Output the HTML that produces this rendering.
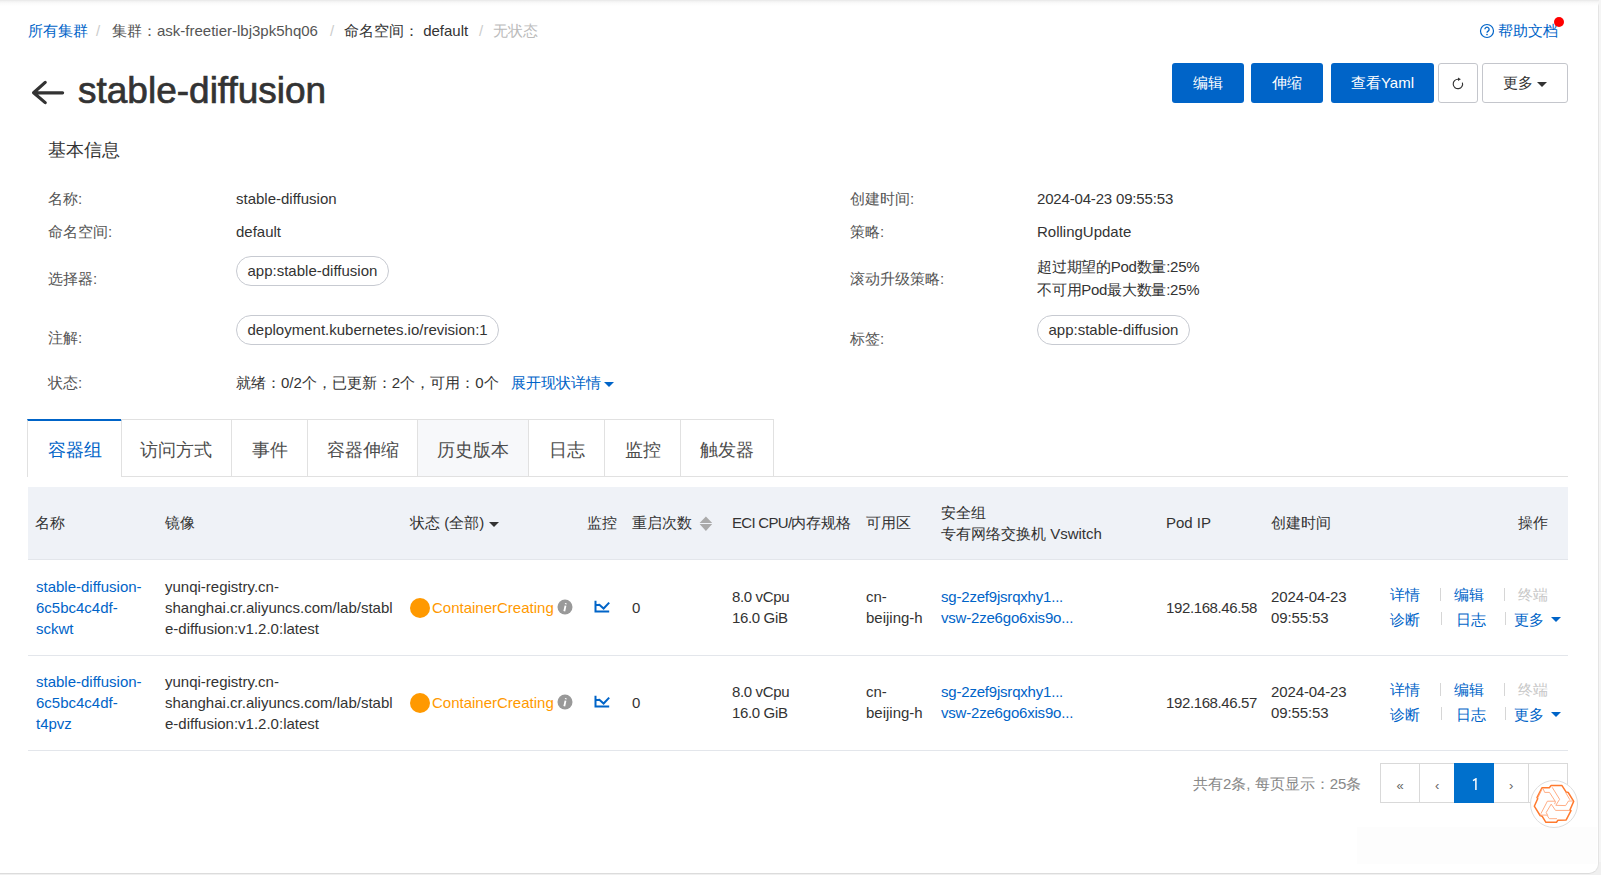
<!DOCTYPE html>
<html><head><meta charset="utf-8">
<style>
html,body{margin:0;padding:0}
body{width:1601px;height:875px;overflow:hidden;background:#f0f0f0;position:relative;font-family:"Liberation Sans",sans-serif;font-size:15px;color:#333}
#panel{position:absolute;left:-10px;top:0;width:1608px;height:873px;background:#fff;border-right:1px solid #e4e4e4;border-bottom:1px solid #dcdcdc;border-bottom-right-radius:10px}
#topshade{position:absolute;left:0;top:0;width:1601px;height:6px;background:linear-gradient(#e6e6e6,#f2f2f2 20%,#fafafa 50%,rgba(255,255,255,0))}
.t{position:absolute;white-space:nowrap;line-height:20px}
.blue{color:#0064c8}
.lbl{color:#555}
.btn{position:absolute;top:63px;height:40px;background:#0064c8;border-radius:3px;color:#fff;font-size:15px;line-height:40px;text-align:center}
.obtn{position:absolute;top:63px;height:38px;background:#fff;border:1px solid #c4c6cc;border-radius:3px;color:#333;line-height:38px;text-align:center}
.tag{position:absolute;height:28px;border:1px solid #c7cad1;border-radius:15px;line-height:27px;padding:0 10.5px;color:#333}
.tab{position:absolute;top:419px;height:56px;border-top:1px solid #e1e1e1;border-right:1px solid #e1e1e1;border-bottom:1px solid #e1e1e1;font-size:17.5px;line-height:60px;color:#4d4d4d;text-align:center;box-sizing:content-box}
.hdr{position:absolute;left:28px;top:487px;width:1540px;height:72px;background:#eff2f7;border-bottom:1px solid #e3e6eb}
.rowline{position:absolute;left:28px;width:1540px;height:1px;background:#e3e6eb}
.sep{position:absolute;width:1px;height:13px;background:#d6d6d6}
</style></head><body>
<div id="panel"></div>
<div id="topshade"></div>
<div style="position:absolute;left:1599px;top:0;width:2px;height:862px;background:#f5f5f5"></div>

<!-- breadcrumb -->
<div class="t blue" style="left:28px;top:21px">所有集群</div>
<div class="t" style="left:96px;top:21px;color:#ccc">/</div>
<div class="t" style="left:112px;top:21px;color:#555">集群：ask-freetier-lbj3pk5hq06</div>
<div class="t" style="left:330px;top:21px;color:#ccc">/</div>
<div class="t" style="left:344px;top:21px;color:#333">命名空间：&nbsp;default</div>
<div class="t" style="left:479px;top:21px;color:#ccc">/</div>
<div class="t" style="left:493px;top:21px;color:#bbb">无状态</div>

<!-- help -->
<svg style="position:absolute;left:1479px;top:23px" width="16" height="16" viewBox="0 0 16 16"><circle cx="8" cy="8" r="6.5" fill="none" stroke="#0064c8" stroke-width="1.2"/><path d="M5.9 6.3a2.1 2.1 0 1 1 3.2 1.8c-.8.5-1.1.8-1.1 1.6" fill="none" stroke="#0064c8" stroke-width="1.3"/><circle cx="8" cy="11.6" r=".8" fill="#0064c8"/></svg>
<div class="t blue" style="left:1498px;top:21px">帮助文档</div>
<div style="position:absolute;left:1554px;top:17px;width:10px;height:10px;border-radius:50%;background:#f00"></div>

<!-- title -->
<svg style="position:absolute;left:30px;top:79px" width="36" height="28" viewBox="0 0 36 28"><path d="M3.6 13.8H32.6M15.2 3.4L3.6 13.8L15.2 23.6" fill="none" stroke="#333" stroke-width="3.2" stroke-linecap="round" stroke-linejoin="round"/></svg>
<div class="t" style="left:78px;top:69px;font-size:37px;line-height:44px;color:#333;-webkit-text-stroke:0.7px #333">stable-diffusion</div>

<!-- buttons -->
<div class="btn" style="left:1172px;width:72px">编辑</div>
<div class="btn" style="left:1251px;width:72px">伸缩</div>
<div class="btn" style="left:1331px;width:103px">查看Yaml</div>
<div class="obtn" style="left:1438px;width:38px"><svg style="position:absolute;left:11px;top:12px" width="16" height="16" viewBox="0 0 16 16"><path d="M12.4 6.6A4.7 4.7 0 1 1 8.2 3.3" fill="none" stroke="#333" stroke-width="1.15"/><path d="M8 1.5L10.9 3.3L8 5.1Z" fill="#333"/></svg></div>
<div class="obtn" style="left:1482px;width:84px"><span style="position:absolute;left:20px;top:0">更多</span><svg style="position:absolute;left:54px;top:18px" width="11" height="6" viewBox="0 0 11 6"><path d="M0 0H10L5 5Z" fill="#333"/></svg></div>

<!-- basic info -->
<div class="t" style="left:48px;top:138px;font-size:17.5px;line-height:24px">基本信息</div>

<div class="t lbl" style="left:48px;top:189px">名称:</div>
<div class="t" style="left:236px;top:189px">stable-diffusion</div>
<div class="t lbl" style="left:48px;top:222px">命名空间:</div>
<div class="t" style="left:236px;top:222px">default</div>
<div class="t lbl" style="left:48px;top:269px">选择器:</div>
<div class="tag" style="left:236px;top:256px">app:stable-diffusion</div>
<div class="t lbl" style="left:48px;top:328px">注解:</div>
<div class="tag" style="left:236px;top:315px">deployment.kubernetes.io/revision:1</div>
<div class="t lbl" style="left:48px;top:373px">状态:</div>
<div class="t" style="left:236px;top:373px">就绪：0/2个，已更新：2个，可用：0个</div>
<div class="t blue" style="left:511px;top:373px">展开现状详情</div>
<svg style="position:absolute;left:604px;top:382px" width="11" height="6" viewBox="0 0 11 6"><path d="M0 0H10L5 5Z" fill="#0064c8"/></svg>

<div class="t lbl" style="left:850px;top:189px">创建时间:</div>
<div class="t" style="left:1037px;top:189px;letter-spacing:-0.17px">2024-04-23 09:55:53</div>
<div class="t lbl" style="left:850px;top:222px">策略:</div>
<div class="t" style="left:1037px;top:222px">RollingUpdate</div>
<div class="t lbl" style="left:850px;top:269px">滚动升级策略:</div>
<div class="t" style="left:1037px;top:257px"><span style="letter-spacing:-0.25px">超过期望的Pod数量:25%</span></div>
<div class="t" style="left:1037px;top:280px"><span style="letter-spacing:-0.25px">不可用Pod最大数量:25%</span></div>
<div class="t lbl" style="left:850px;top:329px">标签:</div>
<div class="tag" style="left:1037px;top:315px">app:stable-diffusion</div>

<!-- tabs -->
<div style="position:absolute;left:121px;top:476px;width:1447px;height:1px;background:#e1e1e1"></div>
<div class="tab" style="left:27px;width:93px;border-left:1px solid #e1e1e1;border-top:2px solid #0064c8;height:56px;line-height:59px;border-bottom:none;background:#fff;color:#0064c8">容器组</div>
<div class="tab" style="left:121px;width:110px">访问方式</div>
<div class="tab" style="left:232px;width:75px">事件</div>
<div class="tab" style="left:308px;width:109px">容器伸缩</div>
<div class="tab" style="left:418px;width:110px;background:#f7f8fa">历史版本</div>
<div class="tab" style="left:529px;width:75px">日志</div>
<div class="tab" style="left:605px;width:75px">监控</div>
<div class="tab" style="left:681px;width:92px">触发器</div>

<!-- table header -->
<div class="hdr"></div>
<div class="t" style="left:35px;top:513px">名称</div>
<div class="t" style="left:165px;top:513px">镜像</div>
<div class="t" style="left:410px;top:513px">状态 (全部)</div>
<svg style="position:absolute;left:489px;top:522px" width="11" height="6" viewBox="0 0 11 6"><path d="M0 0H10L5 5Z" fill="#333"/></svg>
<div class="t" style="left:587px;top:513px">监控</div>
<div class="t" style="left:632px;top:513px">重启次数</div>
<svg style="position:absolute;left:699px;top:516px" width="15" height="16" viewBox="0 0 15 16"><path d="M0.6 6.9L6.9 0.6L13.2 6.9Z M0.6 8.1L13.2 8.1L6.9 14.9Z" fill="#aaa"/></svg>
<div class="t" style="left:732px;top:513px"><span style="letter-spacing:-0.7px">ECI CPU/</span>内存规格</div>
<div class="t" style="left:866px;top:513px">可用区</div>
<div class="t" style="left:941px;top:503px">安全组</div>
<div class="t" style="left:941px;top:524px">专有网络交换机 Vswitch</div>
<div class="t" style="left:1166px;top:513px">Pod IP</div>
<div class="t" style="left:1271px;top:513px">创建时间</div>
<div class="t" style="left:1518px;top:513px">操作</div>

<div class="rowline" style="top:655px"></div>
<div class="rowline" style="top:750px"></div>

<!-- row 1 -->
<div class="t blue" style="left:36px;top:576px;line-height:21px">stable-diffusion-<br>6c5bc4c4df-<br>sckwt</div>
<div class="t" style="left:165px;top:576px;line-height:21px">yunqi-registry.cn-<br>shanghai.cr.aliyuncs.com/lab/stabl<br>e-diffusion:v1.2.0:latest</div>
<div style="position:absolute;left:410px;top:598px;width:20px;height:20px;border-radius:50%;background:#ff9900"></div>
<div class="t" style="left:432px;top:598px;color:#ff9900">ContainerCreating</div>
<svg style="position:absolute;left:557px;top:599px" width="16" height="16" viewBox="0 0 16 16"><circle cx="8" cy="8" r="7.5" fill="#999"/><path d="M8.9 4.3L8.7 5.3M8.5 6.6L7.3 12.3" stroke="#fff" stroke-width="1.8" fill="none"/></svg>
<svg style="position:absolute;left:593px;top:599px" width="18" height="15" viewBox="0 0 18 15"><path d="M2.5 1.7V12.6H16.2M2.5 6.2L6.4 5.8L10.6 9.5L16.2 3.6" fill="none" stroke="#0064c8" stroke-width="2"/></svg>
<div class="t" style="left:632px;top:598px">0</div>
<div class="t" style="left:732px;top:586px;line-height:21px;letter-spacing:-0.35px">8.0 vCpu<br>16.0 GiB</div>
<div class="t" style="left:866px;top:586px;line-height:21px">cn-<br>beijing-h</div>
<div class="t blue" style="left:941px;top:586px;line-height:21px;letter-spacing:-0.2px">sg-2zef9jsrqxhy1...<br>vsw-2ze6go6xis9o...</div>
<div class="t" style="left:1166px;top:598px;letter-spacing:-0.38px">192.168.46.58</div>
<div class="t" style="left:1271px;top:586px;line-height:21px;letter-spacing:-0.12px">2024-04-23<br>09:55:53</div>
<div class="t blue" style="left:1390px;top:585px">详情</div>
<div class="sep" style="left:1440px;top:588px"></div>
<div class="t blue" style="left:1454px;top:585px">编辑</div>
<div class="sep" style="left:1504px;top:588px"></div>
<div class="t" style="left:1518px;top:585px;color:#c8c8c8">终端</div>
<div class="t blue" style="left:1390px;top:610px">诊断</div>
<div class="sep" style="left:1441px;top:612px"></div>
<div class="t blue" style="left:1456px;top:610px">日志</div>
<div class="sep" style="left:1505px;top:612px"></div>
<div class="t blue" style="left:1514px;top:610px">更多</div>
<svg style="position:absolute;left:1551px;top:617px" width="11" height="6" viewBox="0 0 11 6"><path d="M0 0H10L5 5Z" fill="#0064c8"/></svg>

<!-- row 2 -->
<div class="t blue" style="left:36px;top:671px;line-height:21px">stable-diffusion-<br>6c5bc4c4df-<br>t4pvz</div>
<div class="t" style="left:165px;top:671px;line-height:21px">yunqi-registry.cn-<br>shanghai.cr.aliyuncs.com/lab/stabl<br>e-diffusion:v1.2.0:latest</div>
<div style="position:absolute;left:410px;top:693px;width:20px;height:20px;border-radius:50%;background:#ff9900"></div>
<div class="t" style="left:432px;top:693px;color:#ff9900">ContainerCreating</div>
<svg style="position:absolute;left:557px;top:694px" width="16" height="16" viewBox="0 0 16 16"><circle cx="8" cy="8" r="7.5" fill="#999"/><path d="M8.9 4.3L8.7 5.3M8.5 6.6L7.3 12.3" stroke="#fff" stroke-width="1.8" fill="none"/></svg>
<svg style="position:absolute;left:593px;top:694px" width="18" height="15" viewBox="0 0 18 15"><path d="M2.5 1.7V12.6H16.2M2.5 6.2L6.4 5.8L10.6 9.5L16.2 3.6" fill="none" stroke="#0064c8" stroke-width="2"/></svg>
<div class="t" style="left:632px;top:693px">0</div>
<div class="t" style="left:732px;top:681px;line-height:21px;letter-spacing:-0.35px">8.0 vCpu<br>16.0 GiB</div>
<div class="t" style="left:866px;top:681px;line-height:21px">cn-<br>beijing-h</div>
<div class="t blue" style="left:941px;top:681px;line-height:21px;letter-spacing:-0.2px">sg-2zef9jsrqxhy1...<br>vsw-2ze6go6xis9o...</div>
<div class="t" style="left:1166px;top:693px;letter-spacing:-0.38px">192.168.46.57</div>
<div class="t" style="left:1271px;top:681px;line-height:21px;letter-spacing:-0.12px">2024-04-23<br>09:55:53</div>
<div class="t blue" style="left:1390px;top:680px">详情</div>
<div class="sep" style="left:1440px;top:683px"></div>
<div class="t blue" style="left:1454px;top:680px">编辑</div>
<div class="sep" style="left:1504px;top:683px"></div>
<div class="t" style="left:1518px;top:680px;color:#c8c8c8">终端</div>
<div class="t blue" style="left:1390px;top:705px">诊断</div>
<div class="sep" style="left:1441px;top:707px"></div>
<div class="t blue" style="left:1456px;top:705px">日志</div>
<div class="sep" style="left:1505px;top:707px"></div>
<div class="t blue" style="left:1514px;top:705px">更多</div>
<svg style="position:absolute;left:1551px;top:712px" width="11" height="6" viewBox="0 0 11 6"><path d="M0 0H10L5 5Z" fill="#0064c8"/></svg>

<!-- pagination -->
<div class="t" style="left:1193px;top:774px;color:#888">共有2条, 每页显示：25条</div>
<div style="position:absolute;left:1380px;top:763px;width:186px;height:38px;border:1px solid #d9d9d9"></div>
<div style="position:absolute;left:1419px;top:763px;width:1px;height:40px;background:#d9d9d9"></div>
<div style="position:absolute;left:1528px;top:763px;width:1px;height:40px;background:#d9d9d9"></div>
<div class="t" style="left:1396.5px;top:776px;font-size:13px;color:#666">«</div>
<div class="t" style="left:1435px;top:776px;font-size:13px;color:#666">‹</div>
<div style="position:absolute;left:1454px;top:763px;width:40px;height:40px;background:#0070cc;color:#fff;line-height:40px;text-align:center"><svg style="position:absolute;left:16.5px;top:15px" width="10" height="13" viewBox="0 0 10 13"><path d="M2 2.6L4.9 0.9V12" fill="none" stroke="#fff" stroke-width="1.5"/></svg></div>
<div class="t" style="left:1509px;top:776px;font-size:13px;color:#666">›</div>

<div style="position:absolute;left:1357px;top:827px;width:240px;height:37px;background:#fdfdfd"></div>
<!-- floating assistant -->
<div style="position:absolute;left:1530px;top:780px;width:46px;height:46px;border-radius:50%;background:#fff;border:1px solid #dedede"></div>
<svg style="position:absolute;left:1525px;top:775px" width="60" height="60" viewBox="0 0 60 60">
<path d="M17.1 12.7H24.3L26.1 10.6H37L41.2 17.1L43.2 17.5L48.7 26.4L44.9 35L46 35.7L41.2 44.9L32.9 45.3L31.5 47.3H20.9L17.1 41.2L15.1 40.5L9.3 31.2L12.7 23.7L12 22.6Z" fill="none" stroke="#ff7a2e" stroke-width="1.5" stroke-linejoin="round"/>
<path d="M18.0 13.5 L19.7 17.4 L24.5 17.4 M24.5 17.4 L30.5 26.7 L29.6 29.1 M27.2 12.3 L34.6 24.3 L30.8 30.3 L40.6 30.6 L43.5 26.0 L48.0 26.0 M40.6 17.4 L44.9 24.8 M30.0 26.2 L22.4 26.2 L15.9 38.7 M26.2 29.1 L21.2 37.5 M26.2 29.1 L30.5 35.4 L44.2 35.4 M14.7 40.1 L21.9 40.1 L24.3 43.7 L32.0 43.7 M12.8 22.9 L17.1 13.8 M21.2 37.5 L22.8 40.6" fill="none" stroke="#ffa477" stroke-width="0.9" stroke-linejoin="round"/>
</svg>
</body></html>
